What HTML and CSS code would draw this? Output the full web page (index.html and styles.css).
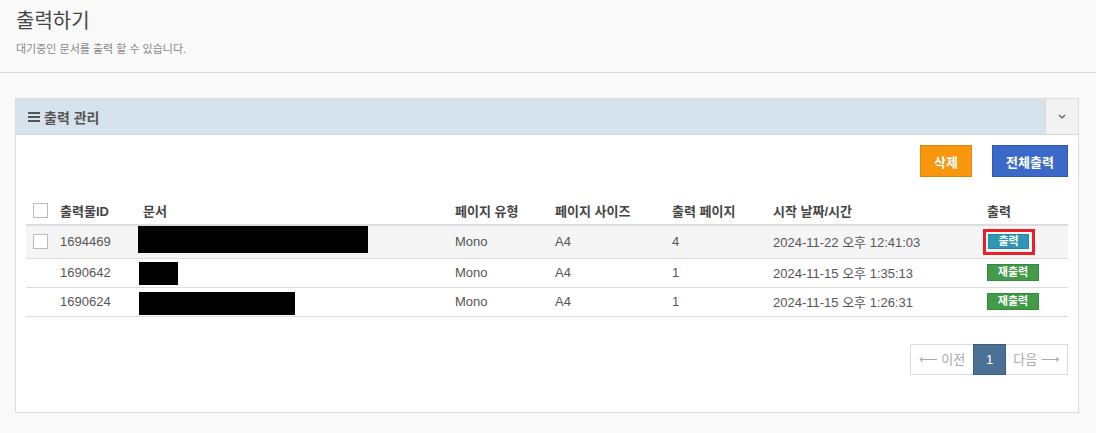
FILE: index.html
```html
<!DOCTYPE html>
<html lang="ko">
<head>
<meta charset="UTF-8" />
<title>출력하기</title>
<link rel="stylesheet" href="styles.css">
</head>
<body>
<div class="page-header">
  <h1>출력하기</h1>
  <p class="desc">대기중인 문서를 출력 할 수 있습니다.</p>
</div>

<div class="panel">
  <div class="panel-head">
    <div class="panel-title">
      <svg class="bars" width="12" height="10" viewBox="0 0 12 10"><rect x="0" y="0" width="12" height="2" fill="#555"/><rect x="0" y="4" width="12" height="2" fill="#555"/><rect x="0" y="8" width="12" height="2" fill="#555"/></svg>
      출력 관리
    </div>
    <button class="collapse" aria-label="접기">
      <svg width="8" height="5" viewBox="0 0 8 5"><path d="M1 1 L4 4 L7 1" fill="none" stroke="#555" stroke-width="1.2"/></svg>
    </button>
  </div>
  <div class="panel-body">
    <div class="actions">
      <button class="btn btn-orange">삭제</button>
      <button class="btn btn-blue">전체출력</button>
    </div>
    <table class="jobs">
      <colgroup>
        <col style="width:26px"><col style="width:83px"><col style="width:312px"><col style="width:100px">
        <col style="width:117px"><col style="width:101px"><col style="width:214px"><col style="width:89px">
      </colgroup>
      <thead>
        <tr>
          <th class="chk"><span class="box"></span></th>
          <th>출력물ID</th>
          <th>문서</th>
          <th>페이지 유형</th>
          <th>페이지 사이즈</th>
          <th>출력 페이지</th>
          <th>시작 날짜/시간</th>
          <th>출력</th>
        </tr>
      </thead>
      <tbody>
        <tr class="hover">
          <td class="chk"><span class="box"></span></td>
          <td>1694469</td>
          <td class="doc"><span class="redact r1"></span></td>
          <td>Mono</td>
          <td>A4</td>
          <td>4</td>
          <td>2024-11-22 오후 12:41:03</td>
          <td><span class="mark"><button class="tag tag-teal">출력</button></span></td>
        </tr>
        <tr>
          <td class="chk"></td>
          <td>1690642</td>
          <td class="doc"><span class="redact r2"></span></td>
          <td>Mono</td>
          <td>A4</td>
          <td>1</td>
          <td>2024-11-15 오후 1:35:13</td>
          <td><button class="tag tag-green">재출력</button></td>
        </tr>
        <tr>
          <td class="chk"></td>
          <td>1690624</td>
          <td class="doc"><span class="redact r3"></span></td>
          <td>Mono</td>
          <td>A4</td>
          <td>1</td>
          <td>2024-11-15 오후 1:26:31</td>
          <td><button class="tag tag-green">재출력</button></td>
        </tr>
      </tbody>
    </table>
    <div class="pager">
      <span class="pg prev">⟵ 이전</span>
      <span class="pg active">1</span>
      <span class="pg next">다음 ⟶</span>
    </div>
  </div>
</div>
</body>
</html>
```

FILE: styles.css
```css
* {
  box-sizing: border-box;
}
body {
  margin: 0;
  background: #f9f9f9;
  font-family: "Liberation Sans", Arial, "Noto Sans CJK KR", sans-serif;
  font-size: 13px;
  color: #555;
}
.page-header {
  height: 73px;
  padding: 8px 16px 0;
  border-bottom: 1px solid #dcdcdc;
}
.page-header h1 {
  margin: 0;
  font-size: 20px;
  font-weight: normal;
  color: #444;
  line-height: 26px;
}
.page-header .desc {
  margin: 6px 0 0;
  font-size: 11px;
  color: #888;
}
.panel {
  margin: 25px 17px 0 15px;
  background: #fff;
  border: 1px solid #dcdcdc;
}
.panel-head {
  display: flex;
  height: 36px;
  background: #d7e3ec;
  border-bottom: 1px solid #d0d6db;
}
.panel-title {
  flex: 1;
  display: flex;
  align-items: center;
  gap: 4px;
  padding-left: 12px;
  font-weight: bold;
  font-size: 14px;
  color: #555;
}
.collapse {
  width: 33px;
  border: none;
  border-left: 1px solid #dcdcdc;
  background: #f2f2f2;
  padding: 0;
  display: flex;
  align-items: center;
  justify-content: center;
}
.panel-body {
  padding: 10px 10px 37px;
}
.actions {
  display: flex;
  justify-content: flex-end;
  gap: 20px;
  margin-bottom: 20px;
}
.btn {
  height: 32px;
  padding: 0;
  font-family: inherit;
  font-size: 13px;
  font-weight: bold;
  color: #fff;
  border: 1px solid;
}
.btn-orange {
  width: 52px;
  background: #f8960d;
  border-color: #e0860a;
}
.btn-blue {
  width: 76px;
  background: #3a69c7;
  border-color: #3159ad;
}
.jobs {
  width: 1042px;
  table-layout: fixed;
  border-collapse: collapse;
}
.jobs th {
  text-align: left;
  font-weight: bold;
  color: #444;
  height: 28px;
  padding: 0 8px;
  border-bottom: 2px solid #ddd;
  white-space: nowrap;
}
.jobs td {
  height: 29px;
  padding: 0 8px;
  border-bottom: 1px solid #ddd;
  white-space: nowrap;
  vertical-align: middle;
}
.jobs tr.hover td {
  height: 33px;
  background: #f5f5f5;
}
.jobs td.doc {
  padding-left: 3px;
  vertical-align: top;
}
.jobs .chk {
  padding: 0 0 0 7px;
}
.box {
  display: block;
  width: 15px;
  height: 15px;
  border: 1px solid #bbb;
  background: #fff;
}
.redact {
  display: block;
  background: #000;
}
.r1 { width: 230px; height: 27px; margin-top: 0; }
.r2 { width: 39px; height: 23px; margin-top: 3px; margin-left: 1px; }
.r3 { width: 156px; height: 23px; margin-top: 4px; margin-left: 1px; }
.mark {
  display: inline-block;
  margin-left: -4px;
  border: 3px solid #e8202a;
  padding: 2px 3px 3px 2px;
}
.tag {
  display: block;
  font-family: inherit;
  font-size: 11px;
  font-weight: bold;
  color: #fff;
  border: 1px solid;
  padding: 0;
  line-height: 15px;
}
.tag-teal {
  width: 41px;
  height: 15px;
  line-height: 13px;
  background: #2f97b5;
  border-color: #2a86a1;
}
.tag-green {
  width: 52px;
  height: 17px;
  background: #419b48;
  border-color: #37883d;
}
.pager {
  display: flex;
  justify-content: flex-end;
  margin-top: 27px;
}
.pg {
  height: 31px;
  line-height: 29px;
  border: 1px solid #ddd;
  color: #aaa;
  text-align: center;
  font-size: 13px;
}
.pg.prev { width: 63px; border-right: none; }
.pg.next { width: 62px; border-left: none; }
.pg.active {
  width: 33px;
  background: #4a7096;
  border-color: #3b5d7e;
  color: #fff;
}
```
